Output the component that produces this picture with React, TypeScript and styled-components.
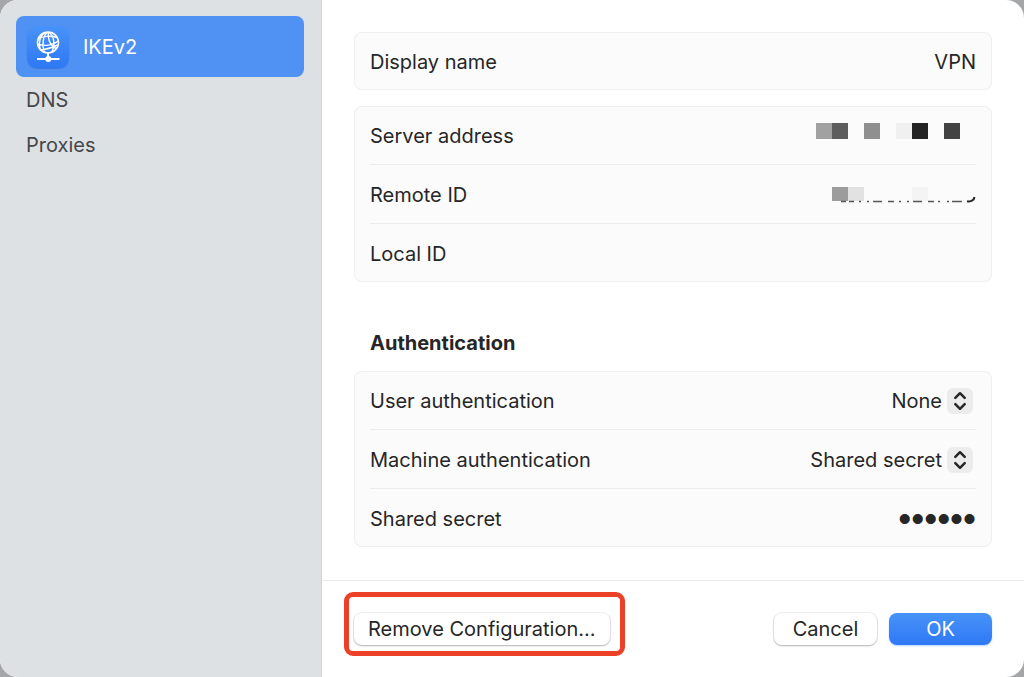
import React from "react";
import styled, { createGlobalStyle, css } from "styled-components";

const GlobalStyle = createGlobalStyle`
  *, *::before, *::after { box-sizing: border-box; }
  body {
    margin: 0;
    background: #a4a6a7;
    color: #262626;
    font-family: Inter, "Liberation Sans", sans-serif;
    font-size: 20px;
    line-height: 24px;
  }
  button, input, select { font: inherit; color: inherit; }
`;

const Dialog = styled.div`
  display: flex;
  min-height: 100vh;
  border-radius: 18px;
  overflow: hidden;
  background: #ffffff;
`;

const Sidebar = styled.nav`
  flex: 0 0 322px;
  display: flex;
  flex-direction: column;
  gap: 1px;
  padding: 16px 17px 16px 16px;
  background: #dde1e4;
  border-right: 1px solid #cfd3d6;
`;

const NavItem = styled.button<{ $active?: boolean }>`
  display: flex;
  align-items: center;
  gap: 14px;
  height: 44px;
  padding: 0 10px;
  border: 0;
  border-radius: 8px;
  background: transparent;
  color: #454748;
  text-align: left;
  ${(p) =>
    p.$active &&
    css`
      height: 61px;
      padding: 0 11px;
      background: #5091f4;
      color: #ffffff;
    `}
`;

const VpnBadge = styled.span`
  display: flex;
  width: 42px;
  height: 42px;
  border-radius: 10px;
  background: linear-gradient(#4793f8, #2e78f5);
  box-shadow: 0 1px 1px rgba(20, 70, 160, 0.35);
`;

const Main = styled.main`
  flex: 1;
  min-width: 0;
  display: flex;
  flex-direction: column;
`;

const Form = styled.form`
  flex: 1;
  display: flex;
  flex-direction: column;
  gap: 16px;
  padding: 32px;
`;

const Card = styled.div`
  border-radius: 8px;
  background: #fbfbfb;
  box-shadow: inset 0 0 0 1px #efefef;
  padding: 0 16px;
`;

const Section = styled.section`
  display: flex;
  flex-direction: column;
  gap: 16px;
  margin-top: 33px;
`;

const SectionTitle = styled.h2`
  margin: 0;
  padding: 0 16px;
  font-size: 20px;
  line-height: 24px;
  font-weight: 700;
`;

const Row = styled.div`
  display: flex;
  align-items: center;
  justify-content: space-between;
  gap: 16px;
  height: 58px;
  padding-top: 2px;
  & + & {
    height: 59px;
    border-top: 1px solid #ececec;
  }
`;

const Label = styled.label`
  white-space: nowrap;
`;

const TextField = styled.input`
  flex: 1;
  min-width: 0;
  padding: 0;
  border: 0;
  outline: 0;
  background: transparent;
  text-align: right;
`;

const SecretField = styled(TextField)`
  height: 40px;
  font-family: "Liberation Sans", sans-serif;
  font-size: 37px;
  line-height: 40px;
`;

const SelectWrap = styled.span`
  position: relative;
  display: flex;
  align-items: center;
`;

const Select = styled.select`
  appearance: none;
  field-sizing: content;
  padding: 0 34px 0 0;
  border: 0;
  outline: 0;
  background: transparent;
  text-align-last: right;
`;

const Stepper = styled.span`
  position: absolute;
  right: 3px;
  display: flex;
  width: 26px;
  height: 26px;
  border-radius: 6px;
  background: #ececec;
  pointer-events: none;
`;

const Footer = styled.footer`
  display: flex;
  align-items: center;
  gap: 12px;
  height: 97px;
  padding: 0 32px;
  border-top: 1px solid #ebebeb;
`;

const Highlighted = styled.div`
  position: relative;
  margin-right: auto;
  &::after {
    content: "";
    position: absolute;
    inset: -21px -15px -11px -10px;
    border: 5px solid #ec4128;
    border-radius: 9px;
    pointer-events: none;
  }
`;

const Button = styled.button<{ $primary?: boolean }>`
  display: block;
  height: 32px;
  min-width: 103px;
  padding: 0 14px;
  border: 0;
  border-radius: 8px;
  white-space: nowrap;
  background: #ffffff;
  box-shadow: 0 0 0 1px rgba(0, 0, 0, 0.06), 0 1px 2px rgba(0, 0, 0, 0.25);
  ${(p) =>
    p.$primary &&
    css`
      background: linear-gradient(#4793f8, #2e78f5);
      color: #ffffff;
      box-shadow: 0 1px 2px rgba(46, 120, 245, 0.35);
    `}
`;

const GlobeIcon = () => (
  <svg width="42" height="42" viewBox="0 0 42 42" fill="none" stroke="#fff" strokeWidth="1.4" aria-hidden="true">
    <circle cx="21" cy="16.5" r="10.5" strokeWidth="1.6" />
    <path d="M21 6.200C16 9 14.500 19 17.500 26.500M22 6.200C27 10 28.500 18 25 26M21.500 6.200C20.500 11 22 19 29 22.500M18.500 6.500C13 9 11.500 16 13 23M11 13C16 10 25 9.500 30 11.500M10.700 18C17 20.500 26 19.500 31.300 15M14 24C19 23.500 25 21.500 30.500 19" />
    <path d="M21 27V33M10 33H32.500" strokeWidth="2" />
    <circle cx="21.300" cy="33" r="3" fill="#fff" stroke="none" />
  </svg>
);

const Chevrons = () => (
  <Stepper aria-hidden="true">
    <svg width="26" height="26" viewBox="0 0 26 26" fill="none" stroke="#262626" strokeWidth="2.5" strokeLinecap="round" strokeLinejoin="round">
      <path d="M8.300 9.800L13 5.200L17.700 9.800M8.300 16.200L13 20.800L17.700 16.200" />
    </svg>
  </Stepper>
);

type Block = [x: number, color: string];

const serverBlocks: Block[] = [
  [0, "#a1a1a1"],
  [16, "#5d5d5d"],
  [48, "#8f8f8f"],
  [80, "#f0f0f0"],
  [96, "#232323"],
  [128, "#424242"],
];

const remoteBlocks: Block[] = [
  [16, "#9c9c9c"],
  [32, "#e2e2e2"],
  [96, "#f4f4f4"],
];

const Mosaic = ({ blocks, top, height, label, children }: { blocks: Block[]; top: number; height: number; label: string; children?: React.ReactNode }) => (
  <svg width="160" height="26" viewBox="0 0 160 26" role="img" aria-label={label}>
    {blocks.map(([x, color]) => (
      <rect key={x} x={x} y={top} width="16" height={height} fill={color} />
    ))}
    {children}
  </svg>
);

export default function App() {
  return (
    <>
      <GlobalStyle />
      <Dialog>
        <Sidebar>
          <NavItem $active>
            <VpnBadge>
              <GlobeIcon />
            </VpnBadge>
            IKEv2
          </NavItem>
          <NavItem>DNS</NavItem>
          <NavItem>Proxies</NavItem>
        </Sidebar>
        <Main>
          <Form id="vpn">
            <Card>
              <Row>
                <Label htmlFor="name">Display name</Label>
                <TextField id="name" defaultValue="VPN" />
              </Row>
            </Card>
            <Card>
              <Row>
                <span>Server address</span>
                <Mosaic blocks={serverBlocks} top={0} height={16} label="Hidden server address" />
              </Row>
              <Row>
                <span>Remote ID</span>
                <Mosaic blocks={remoteBlocks} top={5} height={14} label="Hidden remote ID">
                  <path
                    d="M25 19.500H30M33 19.500H38M43 19.500H45M51 19.500H53M57 19.500H66M72 19.500H78M83 19.500H85M91 19.500H93M97 19.500H106M112 19.500H118M122 19.500H124M131 19.500H133M136 19.500H146"
                    fill="none"
                    stroke="#555"
                    strokeWidth="1.4"
                  />
                  <path d="M151 19.200C155 20 158 18.500 158.500 15" fill="none" stroke="#262626" strokeWidth="2" />
                </Mosaic>
              </Row>
              <Row>
                <Label htmlFor="local">Local ID</Label>
                <TextField id="local" />
              </Row>
            </Card>
            <Section>
              <SectionTitle>Authentication</SectionTitle>
              <Card>
                <Row>
                  <Label htmlFor="user-auth">User authentication</Label>
                  <SelectWrap>
                    <Select id="user-auth" defaultValue="None">
                      <option>None</option>
                    </Select>
                    <Chevrons />
                  </SelectWrap>
                </Row>
                <Row>
                  <Label htmlFor="machine-auth">Machine authentication</Label>
                  <SelectWrap>
                    <Select id="machine-auth" defaultValue="Shared secret">
                      <option>Shared secret</option>
                    </Select>
                    <Chevrons />
                  </SelectWrap>
                </Row>
                <Row>
                  <Label htmlFor="secret">Shared secret</Label>
                  <SecretField id="secret" type="password" defaultValue="secret" />
                </Row>
              </Card>
            </Section>
          </Form>
          <Footer>
            <Highlighted>
              <Button type="button">Remove Configuration...</Button>
            </Highlighted>
            <Button type="button">Cancel</Button>
            <Button type="submit" form="vpn" $primary>
              OK
            </Button>
          </Footer>
        </Main>
      </Dialog>
    </>
  );
}
